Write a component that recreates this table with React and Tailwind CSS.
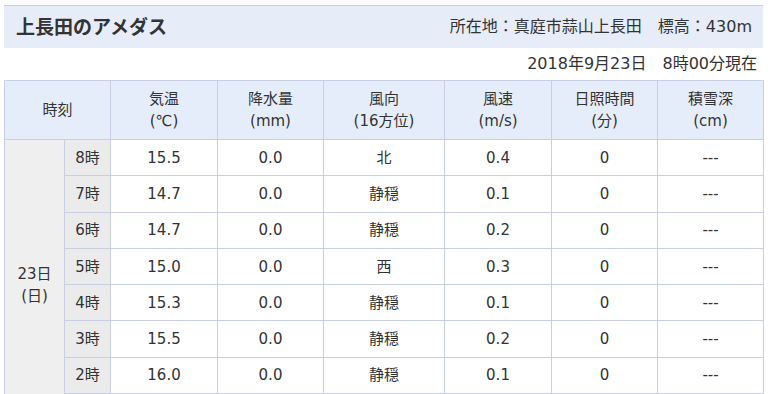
import React from 'react';

const rows = [
  ['8時', '15.5', '0.0', '北', '0.4', '0', '---'],
  ['7時', '14.7', '0.0', '静穏', '0.1', '0', '---'],
  ['6時', '14.7', '0.0', '静穏', '0.2', '0', '---'],
  ['5時', '15.0', '0.0', '西', '0.3', '0', '---'],
  ['4時', '15.3', '0.0', '静穏', '0.1', '0', '---'],
  ['3時', '15.5', '0.0', '静穏', '0.2', '0', '---'],
  ['2時', '16.0', '0.0', '静穏', '0.1', '0', '---'],
  ['1時', '16.2', '0.0', '静穏', '0.2', '0', '---'],
];

const heads = [
  ['気温', '(℃)'],
  ['降水量', '(mm)'],
  ['風向', '(16方位)'],
  ['風速', '(m/s)'],
  ['日照時間', '(分)'],
  ['積雪深', '(cm)'],
];

const cell = 'border border-[#c9cee3] text-center align-middle';

const App = () => {
  return (
    <div
      className="min-h-screen bg-white text-[#333] px-[4px] pt-[5px] w-[771px]"
      style={{ fontFamily: '"DejaVu Sans", "Noto Sans CJK JP", sans-serif' }}
    >
      {/* Title bar */}
      <div className="w-[759px] h-[43px] border-t border-[#d0d0d0] bg-[#e6ecf8] flex items-center justify-between pl-[12px] pr-[11px]">
        <h1 className="text-[19px] font-bold leading-none">上長田のアメダス</h1>
        <div className="text-[16px] leading-none">所在地：真庭市蒜山上長田　標高：430m</div>
      </div>

      <div className="w-[759px] h-[32px] flex items-center justify-end pr-[6px] text-[16px] leading-none">
        2018年9月23日　8時00分現在
      </div>

      {/* Table */}
      <table className="w-[759px] border-collapse table-fixed text-[15px] leading-[22px]">
        <colgroup>
          <col className="w-[60px]" />
          <col className="w-[46px]" />
          <col className="w-[107px]" />
          <col className="w-[106px]" />
          <col className="w-[121px]" />
          <col className="w-[107px]" />
          <col className="w-[106px]" />
          <col className="w-[106px]" />
        </colgroup>
        <thead>
          <tr className="h-[59px] bg-[#e6edfa]">
            <th colSpan={2} className={`${cell} font-normal`}>時刻</th>
            {heads.map(([a, b]) => (
              <th key={a} className={`${cell} font-normal`}>
                <div>{a}</div>
                <div>{b}</div>
              </th>
            ))}
          </tr>
        </thead>
        <tbody>
          {rows.map((r, i) => (
            <tr key={r[0]} className="h-[36.3px]">
              {i === 0 && (
                <td rowSpan={rows.length} className={`${cell} bg-[#efefef]`}>
                  <div>23日</div>
                  <div>(日)</div>
                </td>
              )}
              <td className={`${cell} bg-[#ebebeb]`}>{r[0]}</td>
              {r.slice(1).map((v, j) => (
                <td key={j} className={`${cell} bg-white`}>{v}</td>
              ))}
            </tr>
          ))}
        </tbody>
      </table>
    </div>
  );
};

export default App;
